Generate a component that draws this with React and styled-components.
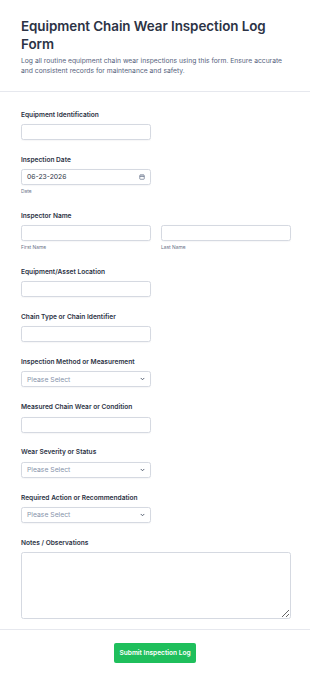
import React from "react";
import styled, { createGlobalStyle } from "styled-components";

const Global = createGlobalStyle`
  html, body { margin: 0; padding: 0; background: #ffffff; }
  body { font-family: Inter, "Noto Sans", "Liberation Sans", sans-serif; -webkit-font-smoothing: antialiased; }
  * { box-sizing: border-box; }
`;

const Page = styled.div`
  width: 310px;
  min-height: 680px;
  background: #ffffff;
  display: flex;
  flex-direction: column;
`;

const Header = styled.header`
  padding: 16.5px 19px 15px 21px;
  border-bottom: 1px solid #e6e8ee;
`;

const Title = styled.h1`
  margin: 0;
  font-size: 13.4px;
  line-height: 18.5px;
  font-weight: 600;
  color: #2c3345;
  letter-spacing: -0.05px;
`;

const Description = styled.p`
  margin: 2.5px 0 0;
  font-size: 6.75px;
  line-height: 10px;
  color: #57647e;
`;

const Form = styled.form`
  display: flex;
  flex-direction: column;
  gap: 15.9px;
  padding: 18.5px 19px 10px 21px;
  border-bottom: 1px solid #e6e8ee;
`;

const Field = styled.div`
  display: flex;
  flex-direction: column;
`;

const Label = styled.label`
  display: block;
  font-size: 6.6px;
  line-height: 9px;
  height: 9px;
  font-weight: 600;
  color: #2c3345;
  margin-bottom: 4.3px;
`;

const Row = styled.div`
  display: grid;
  grid-template-columns: 1fr 1fr;
  column-gap: 10px;
`;

const Col = styled.div`
  display: flex;
  flex-direction: column;
`;

const boxBase = `
  height: 16px;
  border: 1px solid #d5d9e1;
  border-radius: 2.5px;
  background: #ffffff;
  box-shadow: 0 0.5px 1px rgba(40, 50, 80, 0.04);
`;

const TextInput = styled.input`
  ${boxBase}
  display: block;
  width: ${(p) => (p.$full ? "100%" : "129.5px")};
  padding: 0 5px;
  font-family: inherit;
  font-size: 6.6px;
  color: #2c3345;
  outline: none;
`;

const Box = styled.div`
  ${boxBase}
  width: 129.5px;
  display: flex;
  align-items: center;
  justify-content: space-between;
  padding: 0 5px 0 5px;
  font-size: 6.8px;
  color: ${(p) => (p.$placeholder ? "#8894ab" : "#2c3345")};
`;

const SubLabel = styled.span`
  display: block;
  margin-top: 3.5px;
  font-size: 4.9px;
  line-height: 7.3px;
  height: 7.3px;
  color: #6b7489;
`;

const TextArea = styled.textarea`
  width: 100%;
  height: 67.4px;
  border: 1px solid #d5d9e1;
  border-radius: 2.5px;
  padding: 5px;
  font-family: inherit;
  font-size: 6.6px;
  resize: vertical;
  outline: none;
  display: block;
`;

const Footer = styled.div`
  display: flex;
  justify-content: center;
  padding: 13px 0 16px;
`;

const Submit = styled.button`
  width: 81.5px;
  height: 19.4px;
  padding: 0;
  border: none;
  border-radius: 2px;
  background: #1fbf5c;
  color: #ffffff;
  font-family: inherit;
  font-size: 6.6px;
  font-weight: 600;
  cursor: pointer;
`;

const CalendarIcon = () => (
  <svg width="6" height="6" viewBox="0 0 12 12" fill="none" stroke="#57647e" strokeWidth="1.3">
    <rect x="1.5" y="2" width="9" height="8.5" rx="1.2" />
    <line x1="1.5" y1="5" x2="10.5" y2="5" />
    <line x1="4" y1="0.8" x2="4" y2="3" />
    <line x1="8" y1="0.8" x2="8" y2="3" />
  </svg>
);

const Chevron = () => (
  <svg width="5" height="4" viewBox="0 0 10 8" fill="none" stroke="#4b5568" strokeWidth="1.8" strokeLinecap="round" strokeLinejoin="round">
    <polyline points="2,2.5 5,5.5 8,2.5" />
  </svg>
);

const TextField = ({ label }) => (
  <Field>
    <Label>{label}</Label>
    <TextInput type="text" />
  </Field>
);

const SelectField = ({ label }) => (
  <Field>
    <Label>{label}</Label>
    <Box $placeholder>
      <span>Please Select</span>
      <Chevron />
    </Box>
  </Field>
);

export default function App() {
  return (
    <Page>
      <Global />
      <Header>
        <Title>Equipment Chain Wear Inspection Log Form</Title>
        <Description>
          Log all routine equipment chain wear inspections using this form. Ensure accurate and consistent records for maintenance and safety.
        </Description>
      </Header>
      <Form onSubmit={(e) => e.preventDefault()}>
        <TextField label="Equipment Identification" />
        <Field>
          <Label>Inspection Date</Label>
          <Box>
            <span>06-23-2026</span>
            <CalendarIcon />
          </Box>
          <SubLabel>Date</SubLabel>
        </Field>
        <Field>
          <Label>Inspector Name</Label>
          <Row>
            <Col>
              <TextInput type="text" $full />
              <SubLabel>First Name</SubLabel>
            </Col>
            <Col>
              <TextInput type="text" $full />
              <SubLabel>Last Name</SubLabel>
            </Col>
          </Row>
        </Field>
        <TextField label="Equipment/Asset Location" />
        <TextField label="Chain Type or Chain Identifier" />
        <SelectField label="Inspection Method or Measurement" />
        <TextField label="Measured Chain Wear or Condition" />
        <SelectField label="Wear Severity or Status" />
        <SelectField label="Required Action or Recommendation" />
        <Field>
          <Label>Notes / Observations</Label>
          <TextArea />
        </Field>
      </Form>
      <Footer>
        <Submit type="submit">Submit Inspection Log</Submit>
      </Footer>
    </Page>
  );
}
